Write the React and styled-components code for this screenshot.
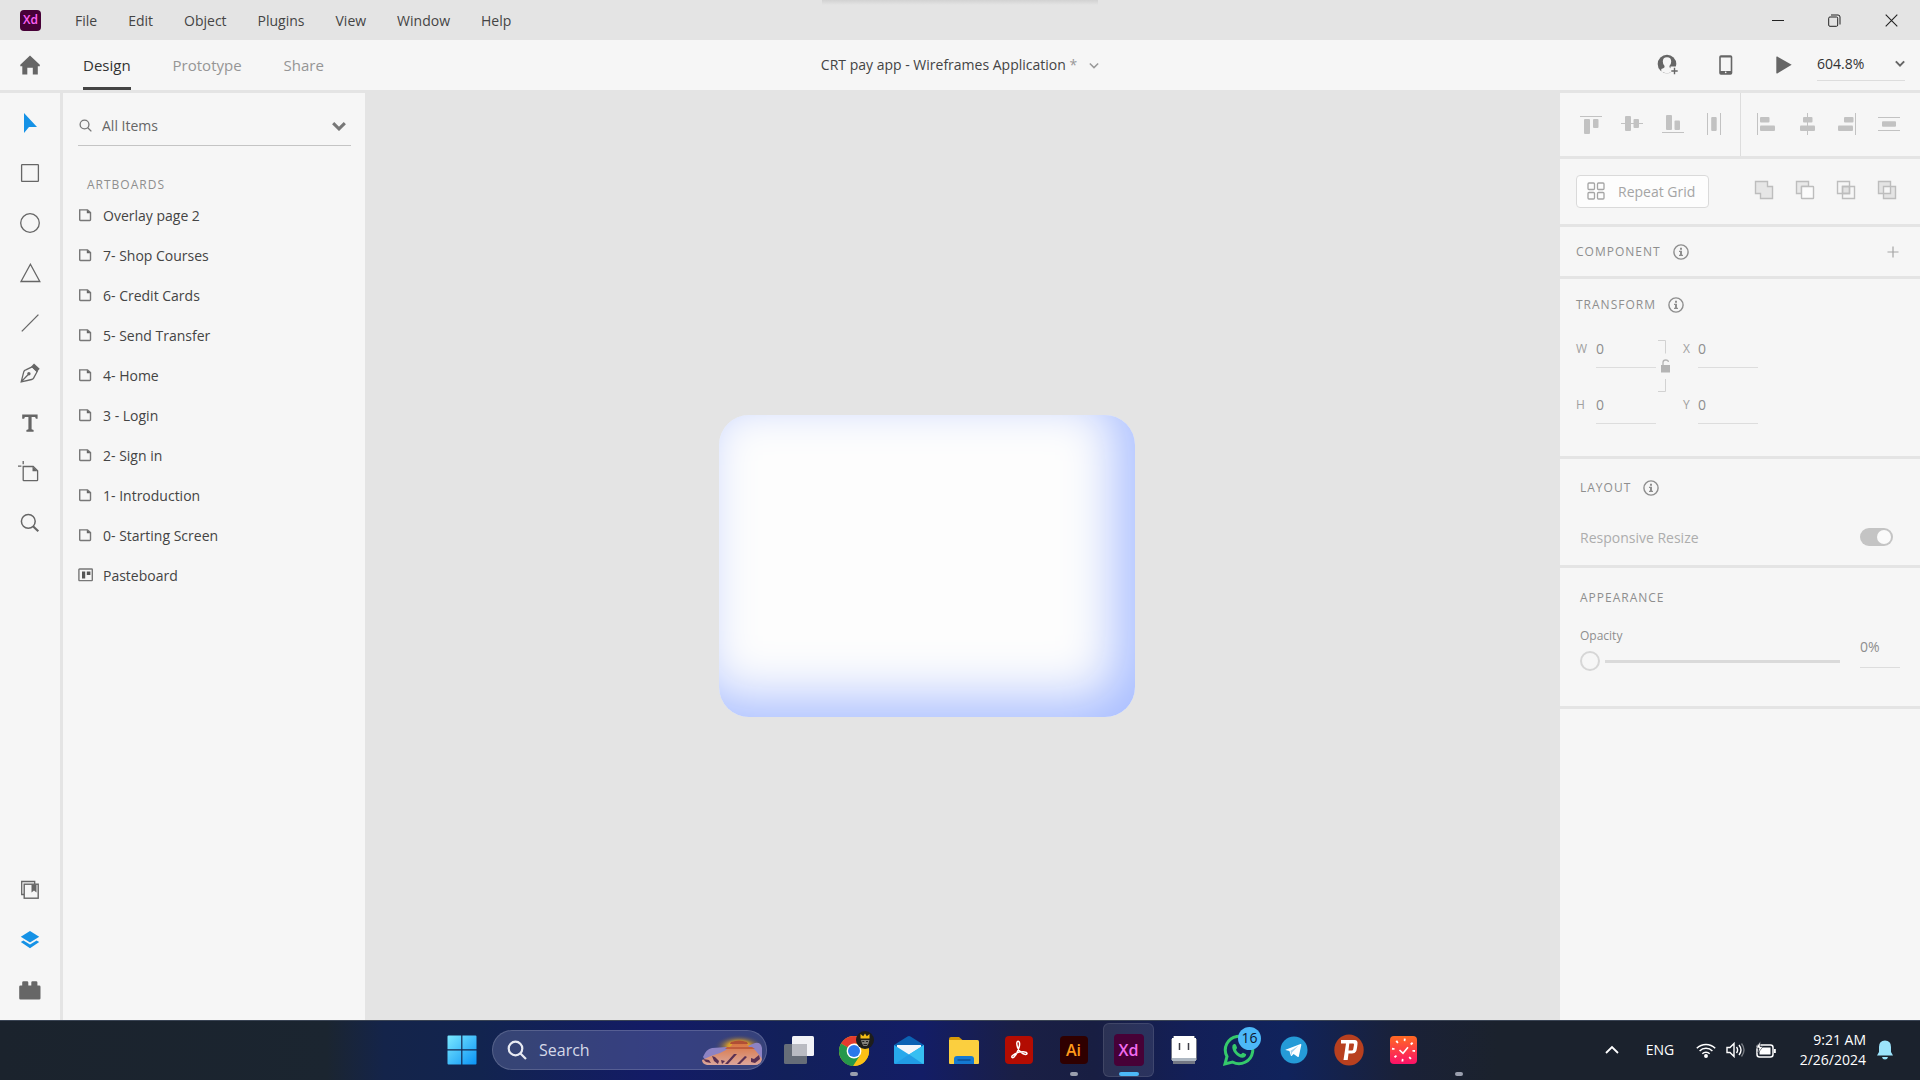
import React from "react";
import styled, { createGlobalStyle } from "styled-components";

const GlobalStyle = createGlobalStyle`
  *, *::before, *::after { box-sizing: border-box; }
  body { margin: 0; background: #e4e4e4; }
  body, button, input { font-family: "Open Sans", "Noto Sans", sans-serif; }
  button { margin: 0; padding: 0; border: 0; background: none; color: inherit; cursor: pointer; }
  input { margin: 0; padding: 0; border: 0; background: none; outline: 0; border-radius: 0; min-width: 0; }
  svg { display: block; flex: none; }
`;

const Window = styled.div`
  display: flex;
  flex-direction: column;
  height: 100vh;
  overflow: hidden;
  background: #e4e4e4;
  color: #444;
  font-size: 14px;
`;

/* Title bar */
const TitleBar = styled.header`
  display: flex;
  align-items: center;
  flex: none;
  height: 40px;
  padding-left: 20px;
  background: linear-gradient(#d2d2d2, #e4e4e4) top center / 276px 5px no-repeat, #e4e4e4;
`;
const AppBadge = styled.span`
  display: grid;
  place-items: center;
  width: 21px;
  height: 21px;
  border-radius: 4px;
  background: #470137;
  color: #ff61f6;
  font-size: 12px;
  font-weight: 600;
  line-height: 20px;
`;
const Menu = styled.nav`
  display: flex;
  gap: 31px;
  flex: 1;
  padding: 2px 0 0 34px;
`;
const MenuButton = styled.button`
  color: #444;
  font-size: 14px;
  line-height: 20px;
`;
const WindowControls = styled.div`
  display: flex;
`;
const WindowButton = styled.button`
  display: grid;
  place-items: center;
  width: 57px;
  height: 38px;
  color: #222;
`;

/* Mode bar */
const ModeBar = styled.div`
  display: grid;
  grid-template-columns: 1fr auto 1fr;
  flex: none;
  height: 50px;
  background: #f6f6f6;
`;
const Modes = styled.div`
  display: flex;
  align-items: stretch;
`;
const HomeButton = styled.button`
  display: grid;
  place-items: center;
  width: 60px;
  color: #666;
`;
const Tabs = styled.div`
  display: flex;
  gap: 42px;
  padding-left: 23px;
`;
const Tab = styled.button`
  padding-top: 3px;
  border-bottom: 3px solid ${(p) => (p.$active ? "#444" : "transparent")};
  color: ${(p) => (p.$active ? "#333" : "#959595")};
  font-size: 15px;
  line-height: 20px;
`;
const DocTitle = styled.button`
  display: flex;
  align-items: center;
  gap: 12px;
  color: #444;
  font-size: 14px;
  line-height: 20px;
`;
const Unsaved = styled.span`
  color: #999;
`;
const ModeActions = styled.div`
  display: flex;
  justify-content: flex-end;
  align-items: center;
  padding-right: 15px;
`;
const ActionButton = styled.button`
  display: grid;
  place-items: center;
  width: 58px;
  height: 48px;
  color: #666;
`;
const ZoomField = styled.div`
  display: flex;
  align-items: center;
  width: 88px;
  height: 32px;
  margin-left: 4px;
  padding-bottom: 2px;
  border-bottom: 1px solid #ddd;
  color: #666;
`;
const ZoomInput = styled.input`
  flex: 1;
  color: #333;
  font-size: 14px;
  line-height: 20px;
`;

/* Workspace */
const Workspace = styled.div`
  display: flex;
  flex: 1;
  min-height: 0;
  padding-top: 3px;
`;
const ToolRail = styled.nav`
  display: flex;
  flex-direction: column;
  justify-content: space-between;
  flex: none;
  width: 60px;
  margin-right: 3px;
  padding: 5px 0;
  background: #f6f6f6;
`;
const ToolGroup = styled.div`
  display: flex;
  flex-direction: column;
`;
const ToolButton = styled.button`
  display: grid;
  place-items: center;
  height: 50px;
  color: ${(p) => (p.$active ? "#1592e6" : "#666")};
`;
const ItemsPanel = styled.aside`
  flex: none;
  width: 302px;
  padding: 13px 14px 0 15px;
  background: #f6f6f6;
`;
const SearchField = styled.div`
  display: flex;
  align-items: center;
  gap: 10px;
  height: 40px;
  padding: 0 5px 0 1px;
  border-bottom: 1px solid #c4c4c4;
  color: #777;
`;
const SearchInput = styled.input`
  flex: 1;
  color: #666;
  font-size: 14px;
  line-height: 20px;
  &::placeholder { color: #666; opacity: 1; }
`;
const SmallCaps = styled.h2`
  margin: 0;
  color: #8e8e8e;
  font-size: 12px;
  font-weight: 400;
  line-height: 20px;
  letter-spacing: 1px;
`;
const GroupTitle = styled(SmallCaps)`
  margin: 29px 0 1px 9px;
`;
const ItemList = styled.ul`
  margin: 0;
  padding: 0;
  list-style: none;
`;
const ItemButton = styled.button`
  display: flex;
  align-items: center;
  gap: 9px;
  width: 100%;
  height: 40px;
  color: #777;
  text-align: left;
`;
const ItemName = styled.span`
  color: #444;
  font-size: 14px;
  line-height: 20px;
`;
const Canvas = styled.main`
  position: relative;
  flex: 1;
  overflow: hidden;
  background: #e4e4e4;
`;
const CardShape = styled.div`
  position: absolute;
  left: 354px;
  top: 322px;
  width: 416px;
  height: 302px;
  border-radius: 30px;
  background: #fdfdfd;
  box-shadow: inset -18px -18px 52px rgb(168, 189, 255);
`;

/* Inspector */
const Inspector = styled.aside`
  display: flex;
  flex-direction: column;
  gap: 3px;
  flex: none;
  width: 360px;
`;
const Section = styled.section`
  display: flex;
  flex-direction: column;
  padding: ${(p) => p.$pad || "0"};
  background: #f6f6f6;
  ${(p) => p.$fill && "flex: 1;"}
`;
const AlignRow = styled.div`
  display: flex;
  height: 63px;
`;
const AlignGroup = styled.div`
  display: flex;
  align-items: center;
  width: 50%;
  padding: 0 0 1px ${(p) => p.$inset}px;
  & + & { border-left: 1px solid #ddd; }
`;
const IconButton = styled.button`
  display: grid;
  place-items: center;
  flex: none;
  width: 41px;
  height: 40px;
  color: #c2c2c2;
`;
const RepeatRow = styled.div`
  display: flex;
  align-items: center;
  justify-content: space-between;
  height: 65px;
  padding: 0 13px 1px 16px;
`;
const RepeatButton = styled.button`
  display: flex;
  align-items: center;
  gap: 13px;
  height: 33px;
  padding: 0 13px 0 10px;
  border: 1px solid #dadada;
  border-radius: 4px;
  background: #fdfdfd;
  color: #a5a5a5;
  font-size: 14px;
`;
const IconRow = styled.div`
  display: flex;
  padding-bottom: 3px;
`;
const Heading = styled.div`
  display: flex;
  align-items: center;
  height: ${(p) => p.$height || 20}px;
  gap: 12px;
`;
const AddButton = styled.button`
  display: grid;
  place-items: center;
  width: 20px;
  height: 20px;
  margin-left: auto;
  color: #a5a5a5;
`;
const TransformGrid = styled.div`
  display: grid;
  grid-template-columns: 80px 27px 75px;
  grid-template-rows: 40px 56px;
  padding-top: 13px;
`;
const NumberField = styled.label`
  display: flex;
  align-items: flex-end;
  justify-content: space-between;
  color: #a0a0a0;
  font-size: 12px;
  line-height: 38px;
`;
const NumberInput = styled.input`
  width: 60px;
  height: 38px;
  padding-bottom: 1px;
  border-bottom: 1px solid #ddd;
  color: #8e8e8e;
  font-size: 14px;
`;
const LockButton = styled.button`
  display: grid;
  justify-items: start;
  align-items: center;
  grid-row: 1 / span 2;
  grid-column: 2;
  height: 76px;
  padding-left: 2px;
`;
const ToggleRow = styled.label`
  display: flex;
  align-items: center;
  justify-content: space-between;
  height: 20px;
  margin-top: 29px;
  color: #adadad;
  font-size: 14px;
`;
const Toggle = styled.input`
  appearance: none;
  display: flex;
  justify-content: flex-end;
  width: 33px;
  height: 18px;
  padding: 2px;
  border-radius: 9px;
  background: #c4c4c4;
  &::before {
    content: "";
    width: 14px;
    height: 14px;
    border-radius: 50%;
    background: #fafafa;
  }
`;
const OpacityRow = styled.div`
  display: flex;
  justify-content: space-between;
  padding-top: 18px;
`;
const OpacityField = styled.div`
  display: flex;
  flex-direction: column;
  width: 260px;
`;
const OpacityLabel = styled.label`
  height: 24px;
  color: #8e8e8e;
  font-size: 12px;
  line-height: 20px;
`;
const Slider = styled.input`
  appearance: none;
  width: 100%;
  height: 22px;
  background: linear-gradient(90deg, transparent 25px, #dadada 25px) center / 100% 3px no-repeat;
  &::-webkit-slider-thumb {
    appearance: none;
    width: 20px;
    height: 20px;
    border: 2px solid #d6d6d6;
    border-radius: 50%;
    background: #f6f6f6;
  }
`;
const PercentInput = styled.input`
  width: 40px;
  height: 42px;
  border-bottom: 1px solid #ddd;
  color: #8e8e8e;
  font-size: 14px;
`;

/* Taskbar */
const Taskbar = styled.footer`
  display: grid;
  grid-template-columns: 1fr auto 1fr;
  flex: none;
  height: 60px;
  padding-bottom: 2px;
  border-top: 1px solid #3a4454;
  background: linear-gradient(90deg, #1b232d 0%, #1b2530 17%, #14244a 20%, #12244f 25%, #131b66 34%, #12205a 41%, #131d66 48%, #1a1f45 53%, #181e42 57%, #131f58 62%, #10235c 67%, #1a2138 73%, #1b222d 78%);
`;
const TaskGroup = styled.div`
  display: flex;
  align-items: center;
  grid-column: 2;
`;
const TaskButton = styled.button`
  display: grid;
  place-items: center;
  position: relative;
  width: 51px;
  height: 54px;
  margin: 0 2px;
  border-radius: 6px;
  border: 1px solid ${(p) => (p.$active ? "rgba(255,255,255,.1)" : "transparent")};
  background: ${(p) => (p.$active ? "rgba(255,255,255,.09)" : "transparent")};
  &::after {
    content: "";
    display: ${(p) => (p.$mark ? "block" : "none")};
    position: absolute;
    bottom: 0;
    width: ${(p) => p.$mark}px;
    height: 4px;
    border-radius: 2px;
    background: ${(p) => (p.$active ? "#4cb8f8" : "#9a9fae")};
  }
`;
const TaskSearch = styled.label`
  display: flex;
  align-items: center;
  gap: 12px;
  width: 275px;
  height: 40px;
  margin: 0 4px 0 3px;
  padding: 0 3px 0 14px;
  border: 1px solid rgba(255, 255, 255, 0.16);
  border-radius: 20px;
  background: rgba(130, 140, 190, 0.32);
  color: #e8eaf2;
`;
const TaskSearchInput = styled.input`
  flex: 1;
  color: #e8eaf2;
  font-size: 16px;
  &::placeholder { color: #d5d9e8; opacity: 1; }
`;
const AppTile = styled.span`
  display: grid;
  place-items: center;
  width: ${(p) => p.$w}px;
  height: ${(p) => p.$h}px;
  border-radius: 4px;
  background: ${(p) => p.$bg};
  color: ${(p) => p.$fg};
  font-size: 16px;
  font-weight: 600;
`;
const CountBadge = styled.span`
  position: absolute;
  top: 3px;
  right: 2px;
  width: 23px;
  height: 23px;
  border-radius: 50%;
  background: #4cb8f8;
  color: #0d1730;
  font-size: 14px;
  line-height: 22px;
  text-align: center;
`;
const Tray = styled.div`
  display: flex;
  align-items: center;
  justify-content: flex-end;
  padding-right: 26px;
  color: #fff;
`;
const TrayButton = styled.button`
  display: grid;
  place-items: center;
  width: ${(p) => p.$w}px;
  height: 48px;
  font-size: 14px;
`;
const Clock = styled.button`
  display: flex;
  flex-direction: column;
  align-items: flex-end;
  width: 84px;
  margin-right: 10px;
  font-size: 14px;
  line-height: 20px;
`;

const Svg = ({ w, h, box, children, ...rest }) => (
  <svg width={w} height={h} viewBox={box || `0 0 ${w} ${h}`} fill="none" aria-hidden="true" {...rest}>
    {children}
  </svg>
);

const Chevron = ({ w = 12, h = 8, stroke = 2 }) => (
  <Svg w={w} h={h} box="0 0 12 8" stroke="currentColor" strokeWidth={stroke}>
    <path d="M1 1.5l5 5 5-5" />
  </Svg>
);

const InfoIcon = () => (
  <Svg w={16} h={16}>
    <circle cx="8" cy="8" r="7.1" stroke="#8e8e8e" strokeWidth="1.4" />
    <path d="M7 3.8h2v2H7zM6 6.8h3v4h1v1.200H6v-1.200h1V8H6z" fill="#8e8e8e" />
  </Svg>
);

const SelectIcon = () => (
  <Svg w={22} h={22}><path d="M5 1v20l5-6h8z" fill="currentColor" /></Svg>
);
const RectangleIcon = () => (
  <Svg w={20} h={20}><rect x="1.6" y="1.6" width="16.8" height="16.8" rx=".6" stroke="currentColor" strokeWidth="1.3" /></Svg>
);
const EllipseIcon = () => (
  <Svg w={20} h={20}><circle cx="10" cy="10" r="9.3" stroke="currentColor" strokeWidth="1.3" /></Svg>
);
const PolygonIcon = () => (
  <Svg w={22} h={20}><path d="M11.4 1.3l9.4 17.2H2z" stroke="currentColor" strokeWidth="1.3" /></Svg>
);
const LineIcon = () => (
  <Svg w={20} h={20}><path d="M1.8 18.4L18.4 1.6" stroke="currentColor" strokeWidth="1.3" /></Svg>
);
const PenIcon = () => (
  <Svg w={20} h={20}>
    <path d="M1.2 18.8L3.8 8.7c.3-.9 1-1.500 2-1.800l6.400-3.100 5 4.700-3.600 6.600c-.4.8-1.100 1.200-2 1.400L1.200 18.800zM1.600 18.400l6.400-6.600" stroke="currentColor" strokeWidth="1.3" />
    <circle cx="8.9" cy="10.8" r="1.7" fill="currentColor" />
    <path d="M11.2 3.400L14 .6l5.700 5.200-2.800 3.200z" fill="currentColor" />
  </Svg>
);
const TextIcon = () => (
  <Svg w={20} h={20}><path d="M2.200 1.500h15.400v4.300h-1.700l-.8-1.900h-3.500v12.400l2 .6v1.800H6.400v-1.800l2-.6V3.900H4.900l-.8 1.900H2.200z" fill="currentColor" /></Svg>
);
const ArtboardToolIcon = () => (
  <Svg w={24} h={24}>
    <path d="M5.200 5.500h10l4.400 4.200v9.300q0 .6-.6.6H5.800q-.6 0-.6-.6zM5.200 0v3.200M0 5.200h3.400" stroke="currentColor" strokeWidth="1.3" />
    <path d="M14.500 5.500l5.200 4.800h-5.200z" fill="currentColor" />
  </Svg>
);
const ZoomToolIcon = () => (
  <Svg w={20} h={20}>
    <circle cx="8.300" cy="8.300" r="6.900" stroke="currentColor" strokeWidth="1.5" />
    <path d="M13 13.300l5.300 5" stroke="currentColor" strokeWidth="2.200" />
  </Svg>
);
const LibrariesIcon = () => (
  <Svg w={20} h={20}>
    <path d="M4 14.500H1.700v-13h13V4" stroke="currentColor" strokeWidth="1.3" />
    <rect x="4.200" y="4.200" width="14" height="14" stroke="currentColor" strokeWidth="1.4" />
    <path d="M11.500 4.500h5v8L14 10.600l-2.500 1.900z" fill="currentColor" />
  </Svg>
);
const LayersIcon = () => (
  <Svg w={20} h={20}>
    <path d="M10 1l9.200 5.700L10 12.400.8 6.700z" fill="currentColor" />
    <path d="M3.400 10.400L10 14.600l6.600-4.200 2.600 1.600-9.200 6.200L.8 12z" fill="currentColor" />
  </Svg>
);
const PluginsIcon = () => (
  <Svg w={22} h={20}>
    <path d="M1.500 5.500h1.700v-3q0-1.300 1.300-1.300h3.600q1.200 0 1.200 1.300v3h3v-3q0-1.300 1.200-1.300h3.600q1.300 0 1.300 1.300v3h1.800q1.300 0 1.300 1.300v11.400q0 1.300-1.300 1.300H1.500Q.2 19.500.2 18.200V6.800q0-1.300 1.300-1.300z" fill="currentColor" />
  </Svg>
);

const tools = [
  ["Select", SelectIcon],
  ["Rectangle", RectangleIcon],
  ["Ellipse", EllipseIcon],
  ["Polygon", PolygonIcon],
  ["Line", LineIcon],
  ["Pen", PenIcon],
  ["Text", TextIcon],
  ["Artboard", ArtboardToolIcon],
  ["Zoom", ZoomToolIcon],
];
const panels = [
  ["Libraries", LibrariesIcon],
  ["Layers", LayersIcon],
  ["Plugins", PluginsIcon],
];

const ArtboardIcon = () => (
  <Svg w={16} h={16}>
    <path d="M1.700 1.900h7.800l3 2.600v7.300q0 .7-.7.700H2.400q-.7 0-.7-.7z" stroke="currentColor" strokeWidth="1.4" />
    <path d="M8.800 1.700l4 3.500h-4z" fill="#666" />
  </Svg>
);
const PasteboardIcon = () => (
  <Svg w={16} h={16}>
    <rect x=".9" y="1" width="13.400" height="11.600" rx=".6" stroke="currentColor" strokeWidth="1.4" />
    <path d="M4 3.400h3.200v7H4zM8.800 3.400h3.600v3.600H8.800z" fill="#555" />
  </Svg>
);

const artboards = ["Overlay page 2", "7- Shop Courses", "6- Credit Cards", "5- Send Transfer", "4- Home", "3 - Login", "2- Sign in", "1- Introduction", "0- Starting Screen"];

const AlignIcon = ({ line, bars }) => (
  <Svg w={22} h={22}>
    <path d={line} stroke="currentColor" strokeWidth="1" />
    {bars.map(([x, y, w, h]) => <rect key={`${x}-${y}`} x={x} y={y} width={w} height={h} rx="1" fill="currentColor" />)}
  </Svg>
);
const alignVertical = [
  ["Align top", "M0 3.500h22", [[4, 6, 6, 15], [13, 6, 5.500, 9]]],
  ["Align middle", "M0 10.500h22", [[4, 3, 6, 15], [12.500, 6, 5.500, 9]]],
  ["Align bottom", "M0 19.500h22", [[4, 2, 6, 15], [12.500, 7.500, 5.500, 9.500]]],
  ["Distribute horizontally", "M4.500 0v22M17.500 0v22", [[8.200, 4, 5.500, 14]]],
];
const alignHorizontal = [
  ["Align left", "M2.500 0v22", [[5, 4, 9.500, 5.500], [5, 12.500, 15, 5.500]]],
  ["Align center", "M11.500 0v22", [[7, 4, 9.500, 5.500], [4, 12.500, 15, 5.500]]],
  ["Align right", "M18.500 0v22", [[7, 4, 9.500, 5.500], [1, 12.500, 15, 5.500]]],
  ["Distribute vertically", "M0 4.500h22M0 17.500h22", [[4, 8.300, 14, 5.500]]],
];

const BoolIcon = ({ kind }) => (
  <Svg w={20} h={20} stroke="#bdbdbd" strokeWidth="1.4">
    {kind === "Add" && <path d="M1.500 1.500h12v5h5v12h-12v-5h-5z" fill="#e6e6e6" />}
    {kind === "Subtract" && <><path d="M6.500 13.500h-5v-12h12v5h-7z" fill="#e9e9e9" /><rect x="6.500" y="6.500" width="12" height="12" rx=".5" fill="#fbfbfb" /></>}
    {kind === "Intersect" && <><path d="M6.500 6.500h7v7h-7z" fill="#e2e2e2" /><path d="M1.500 1.500h12v12h-12zM6.500 6.500h12v12h-12z" /></>}
    {kind === "Exclude Overlap" && <path d="M1.500 1.500h12v12h-12zM6.500 6.500h12v12h-12z" fill="#e4e4e4" fillRule="evenodd" />}
  </Svg>
);

const SearchGlass = ({ size, stroke }) => (
  <Svg w={size} h={size} box="0 0 20 20" stroke="currentColor" strokeWidth={stroke}>
    <circle cx="8.500" cy="8.500" r="6.800" /><path d="M13.500 13.500L19 19" />
  </Svg>
);

const StartIcon = () => (
  <Svg w={30} h={30}>
    <defs><linearGradient id="win" x1="0" y1="0" x2="1" y2="1"><stop stopColor="#7be9ff" /><stop offset="1" stopColor="#0a93f5" /></linearGradient></defs>
    <path d="M.5 1.500q0-1 1-1h12.700v13.700H.5zM15.400.5h13.100q1 0 1 1v12.700H15.400zM.5 15.400h13.700v14.100H1.500q-1 0-1-1zM15.400 15.400h14.100v13.100q0 1-1 1H15.400z" fill="url(#win)" />
  </Svg>
);
const SunsetArt = () => (
  <Svg w={62} h={34}>
    <defs>
      <radialGradient id="sun" cx=".5" cy=".6" r=".5"><stop stopColor="#ffd83a" /><stop offset=".45" stopColor="#cf962c" /><stop offset="1" stopColor="#39406f" stopOpacity="0" /></radialGradient>
      <linearGradient id="rock" x1="0" y1="0" x2="0" y2="1"><stop stopColor="#d9743f" /><stop offset="1" stopColor="#dba69c" /></linearGradient>
    </defs>
    <ellipse cx="38" cy="11" rx="25" ry="12" fill="url(#sun)" />
    <path d="M2 24q3-8 9-9l15-1h18l10-4q6-1 7 5v10q-1 7-7 7H8z" fill="#8d83c4" />
    <path d="M1 27l9-4 9-3 6-3 5-4 2-3h13l3 4 6 3 5 6 2 3q-1 6-8 6H6q-5-1-5-5z" fill="url(#rock)" />
    <path d="M30 9q8-3 16 0l1 2H29z" fill="#b04f35" />
    <path d="M26 14h25l3 2H24z" fill="#c05c3c" />
    <path d="M2 26l6 1 2 3-5-1zM11 23l3 1 4 4-1 3-4-3zM33 21l-9 10h3l9-10zM44 23l-8 8h3l7-7zM50 25l3 1 5-4 1 4-5 4-4-1zM20 27l4 1-3 3z" fill="#593052" />
  </Svg>
);
const TaskViewIcon = () => (
  <Svg w={32} h={30}>
    <rect x="1" y="9" width="23" height="20" rx="1.500" fill="#666d78" />
    <rect x="9" y="1" width="22" height="20" rx="1.500" fill="#f1f2f6" />
    <path d="M9 9h15v12H9z" fill="#b9bbc2" />
  </Svg>
);
const ChromeIcon = () => (
  <Svg w={40} h={40}>
    <circle cx="20" cy="21" r="15" fill="#fbc116" />
    <path d="M20 21L7 13.500A15 15 0 0 1 33 13.500z" fill="#e33b2e" />
    <path d="M20 21L7 13.500A15 15 0 0 0 19 36l7.500-11.300z" fill="#25984b" />
    <path d="M20 13.500h13A15 15 0 0 1 20 36l6.500-11.300z" fill="#fbc116" />
    <circle cx="20" cy="21" r="7.400" fill="#fff" /><circle cx="20" cy="21" r="6" fill="#2b78ea" />
    <circle cx="31" cy="10" r="9" fill="#1d1d1b" />
    <path d="M26.500 8.500V4l2.700 2.300L31 3.500l1.800 2.800L35.500 4v4.500z" fill="#f2bd16" />
    <path d="M27 10h8.500l-1 3.500-1.500 2.500h-3.500L28 13.500z" fill="#817f79" />
    <path d="M28.300 11.500h2M32 11.500h2M29.500 14.500h3.500" stroke="#222" />
  </Svg>
);
const MailIcon = () => (
  <Svg w={32} h={30}>
    <path d="M1 10L14.500 1.500q1.500-1 3 0L31 10l-2 6H3z" fill="#0b62b4" />
    <path d="M4 10h24v10H4z" fill="#f2f6fb" />
    <path d="M1 10v18q0 1 1 1h28q1 0 1-1V10L16 19.500z" fill="#27a9ec" />
    <path d="M16 19.500L31 10v18q0 1-1 1z" fill="#36bff2" /><path d="M16 19.500L30 29H2z" fill="#1c8fe0" opacity=".5" />
  </Svg>
);
const FolderIcon = () => (
  <Svg w={32} h={30}>
    <path d="M1 4q0-2 2-2h8l4 3.500H1z" fill="#d69a08" />
    <path d="M1 5h28.500q1.500 0 1.500 1.500V28q0 1-1 1H2q-1 0-1-1z" fill="#fbcf3f" />
    <path d="M6 29v-5q0-3 3-3h14q3 0 3 3v5z" fill="#1479d2" /><path d="M9.500 25h13" stroke="#0b4f95" strokeWidth="1.5" />
  </Svg>
);
const AcrobatIcon = () => (
  <Svg w={28} h={28}>
    <rect width="28" height="28" rx="4" fill="#b30c02" />
    <path d="M12.600 5.500c2-.8 2.400 2 1.600 5.200-.9 3.500-3.400 8.600-5.400 10.500-1.300 1.200-2.800 0-1.500-1.400 2.300-2.400 7.700-4.100 12.200-3.900 3 .2 3.300 2.600.9 2.500-3-.2-6.500-3.500-7.800-7-.8-2.500-.9-5.500 0-5.900z" stroke="#fff" strokeWidth="1.5" />
  </Svg>
);
const IllustratorIcon = () => <AppTile $w={28} $h={28} $bg="#2f0000" $fg="#ff9a1a">Ai</AppTile>;
const XdIcon = () => <AppTile $w={30} $h={32} $bg="#470137" $fg="#f26bf0">Xd</AppTile>;
const GhostIcon = () => (
  <Svg w={28} h={30}>
    <path d="M3 1h22v3h2v21h-2v4H3v-4H1V4h2z" fill="#737784" />
    <path d="M4 1h20v2h2v20H2V3h2z" fill="#fff" /><path d="M2 23h24v3H2z" fill="#aeb8c2" />
    <path d="M9.500 8v7M18.500 8v7" stroke="#3d3d46" strokeWidth="1.5" />
  </Svg>
);
const WhatsAppIcon = () => (
  <>
    <Svg w={34} h={34}>
      <path d="M3 31l2-7.500A13.700 13.700 0 1 1 10.500 29z" stroke="#35c96b" strokeWidth="3" />
      <path d="M10.500 12.500c1-2 3-2 3.500-.5l1 2.500c.3.800-.8 1.800-1 2.300.8 2 2.800 3.700 4.800 4.500.7-.3 1.600-1.700 2.300-1.500l2.700 1.300c1 .6-.5 3.900-3.300 3.700-5-.3-11.500-7-10-12.300z" fill="#35c96b" />
    </Svg>
    <CountBadge>16</CountBadge>
  </>
);
const TelegramIcon = () => (
  <Svg w={28} h={28}>
    <circle cx="14" cy="14" r="13.500" fill="#259bd7" />
    <path d="M5.500 13.700L20.500 8q1-.3.800.9l-2.500 11.500q-.3 1-1.300.4l-3.900-2.900-2 2q-.6.500-.8-.3l-1.400-4.500-3.900-1.200q-.6-.2 0-.2z" fill="#fff" />
    <path d="M10.500 14.800l8-5-6.500 6.700-.6 3z" fill="#a8d3ec" />
  </Svg>
);
const PsiphonIcon = () => (
  <Svg w={30} h={32}>
    <ellipse cx="15" cy="16" rx="14.700" ry="15.500" fill="#b8401f" />
    <path d="M7 6h13.500q3.500.2 3 4-.6 5.800-1.500 7.500-1 2-4 2h-3.500l-.8 6.500H9.500L12 9.500h3.300l-.8 7h3.300q1.200-.1 1.400-1l.8-4.800q.1-1.200-1-1.200H7z" fill="#fff" />
  </Svg>
);
const WatchIcon = () => (
  <Svg w={28} h={30}>
    <defs><linearGradient id="watch" x1="0" y1="0" x2="0" y2="1"><stop stopColor="#ff6a22" /><stop offset="1" stopColor="#fb1168" /></linearGradient></defs>
    <rect y="1" width="27" height="28" rx="4" fill="url(#watch)" />
    <circle cx="13.500" cy="15" r="10.300" stroke="#fff" strokeWidth="2.6" strokeDasharray="1.8 6.290" />
    <path d="M9.500 15l3.500 3.300 5-6" stroke="#fff" strokeWidth="1.6" />
  </Svg>
);

const tasks = [
  { name: "Task View", Icon: TaskViewIcon },
  { name: "Chrome", Icon: ChromeIcon, mark: 8 },
  { name: "Mail", Icon: MailIcon },
  { name: "File Explorer", Icon: FolderIcon },
  { name: "Acrobat", Icon: AcrobatIcon },
  { name: "Illustrator", Icon: IllustratorIcon, mark: 8 },
  { name: "Adobe XD", Icon: XdIcon, mark: 20, active: true },
  { name: "Ghost", Icon: GhostIcon },
  { name: "WhatsApp", Icon: WhatsAppIcon },
  { name: "Telegram", Icon: TelegramIcon },
  { name: "Psiphon", Icon: PsiphonIcon },
  { name: "Watch", Icon: WatchIcon },
  { name: "Background app", mark: 8 },
];

export default function App() {
  return (
    <Window>
      <GlobalStyle />
      <TitleBar>
        <AppBadge>Xd</AppBadge>
        <Menu>
          {["File", "Edit", "Object", "Plugins", "View", "Window", "Help"].map((m) => <MenuButton key={m}>{m}</MenuButton>)}
        </Menu>
        <WindowControls>
          <WindowButton aria-label="Minimize"><Svg w={12} h={12}><path d="M0 6.500h12" stroke="currentColor" /></Svg></WindowButton>
          <WindowButton aria-label="Restore"><Svg w={13} h={13} stroke="currentColor"><rect x=".7" y="3" width="9" height="9.300" rx="1.200" /><path d="M3 1h7q2 0 2 2v7.500" /></Svg></WindowButton>
          <WindowButton aria-label="Close"><Svg w={13} h={13} stroke="currentColor" strokeWidth="1.1"><path d="M.7.7l11.600 11.600M12.300.7L.7 12.300" /></Svg></WindowButton>
        </WindowControls>
      </TitleBar>

      <ModeBar>
        <Modes>
          <HomeButton aria-label="Home"><Svg w={20} h={20}><path d="M10 .5l9.800 9.300v1.400h-2v8.300h-5v-6.700H7.300v6.700h-5v-8.300h-2V9.800z" fill="currentColor" /></Svg></HomeButton>
          <Tabs>
            <Tab $active>Design</Tab><Tab>Prototype</Tab><Tab>Share</Tab>
          </Tabs>
        </Modes>
        <DocTitle>
          <span>CRT pay app - Wireframes Application <Unsaved>*</Unsaved></span>
          <Unsaved><Chevron w={10} h={7} stroke={1.8} /></Unsaved>
        </DocTitle>
        <ModeActions>
          <ActionButton aria-label="Invite">
            <Svg w={22} h={22}>
              <circle cx="10" cy="10" r="9.300" fill="currentColor" />
              <path d="M10 3.200q4.200 0 4.200 4.300 0 2.800-1.800 4.500-.2 1.700 1.300 2.300l2 .8v2.300q-5.700 3.600-11.400 0v-2.300l2-.8q1.500-.6 1.300-2.300-1.800-1.700-1.800-4.500 0-4.300 4.200-4.300z" fill="#f6f6f6" />
              <path d="M13.500 12.500h8v8h-8z" fill="#f6f6f6" /><path d="M17.500 13.800v6.400M14.300 17h6.400" stroke="currentColor" strokeWidth="1.4" />
            </Svg>
          </ActionButton>
          <ActionButton aria-label="Device preview"><Svg w={14} h={20}><rect x="1" y="1" width="11.500" height="18" rx="1" stroke="currentColor" strokeWidth="1.6" /><path d="M1 16h11.500v3H1zM1 1h11.500v1.500H1z" fill="currentColor" /><circle cx="6.700" cy="17.400" r=".8" fill="#f6f6f6" /></Svg></ActionButton>
          <ActionButton aria-label="Play"><Svg w={16} h={18}><path d="M.3 1.200Q.3.200 1.300.6l14.400 8.200-14.400 8.600q-1 .4-1-.6z" fill="currentColor" /></Svg></ActionButton>
          <ZoomField>
            <ZoomInput aria-label="Zoom level" defaultValue="604.8%" />
            <button aria-label="Zoom presets"><Chevron w={10} h={7} stroke={2.4} /></button>
          </ZoomField>
        </ModeActions>
      </ModeBar>

      <Workspace>
        <ToolRail>
          <ToolGroup>{tools.map(([name, Icon]) => <ToolButton key={name} aria-label={name} $active={name === "Select"}><Icon /></ToolButton>)}</ToolGroup>
          <ToolGroup>{panels.map(([name, Icon]) => <ToolButton key={name} aria-label={name} $active={name === "Layers"}><Icon /></ToolButton>)}</ToolGroup>
        </ToolRail>

        <ItemsPanel>
          <SearchField>
            <SearchGlass size={13} stroke={2} />
            <SearchInput aria-label="Search items" placeholder="All Items" />
            <button aria-label="Filter items"><Chevron w={14} h={10} stroke={2.6} /></button>
          </SearchField>
          <GroupTitle>ARTBOARDS</GroupTitle>
          <ItemList>
            {artboards.map((a) => <li key={a}><ItemButton><ArtboardIcon /><ItemName>{a}</ItemName></ItemButton></li>)}
            <li><ItemButton><PasteboardIcon /><ItemName>Pasteboard</ItemName></ItemButton></li>
          </ItemList>
        </ItemsPanel>

        <Canvas><CardShape /></Canvas>

        <Inspector>
          <Section>
            <AlignRow>
              <AlignGroup $inset={10}>{alignVertical.map(([n, line, bars]) => <IconButton key={n} aria-label={n}><AlignIcon line={line} bars={bars} /></IconButton>)}</AlignGroup>
              <AlignGroup $inset={4}>{alignHorizontal.map(([n, line, bars]) => <IconButton key={n} aria-label={n}><AlignIcon line={line} bars={bars} /></IconButton>)}</AlignGroup>
            </AlignRow>
          </Section>
          <Section>
            <RepeatRow>
              <RepeatButton>
                <Svg w={18} h={18} stroke="currentColor" strokeWidth="1.3"><rect x="1" y="1" width="6.500" height="6.500" rx="1" /><rect x="10.500" y="1" width="6.500" height="6.500" rx="1" /><rect x="1" y="10.500" width="6.500" height="6.500" rx="1" /><rect x="10.500" y="10.500" width="6.500" height="6.500" rx="1" /></Svg>
                Repeat Grid
              </RepeatButton>
              <IconRow>{["Add", "Subtract", "Intersect", "Exclude Overlap"].map((k) => <IconButton key={k} aria-label={k}><BoolIcon kind={k} /></IconButton>)}</IconRow>
            </RepeatRow>
          </Section>
          <Section $pad="0 17px 0 16px">
            <Heading $height={49}>
              <SmallCaps>COMPONENT</SmallCaps><InfoIcon />
              <AddButton aria-label="Make component"><Svg w={12} h={12}><path d="M6 .5v11M.5 6h11" stroke="currentColor" strokeWidth="1.2" /></Svg></AddButton>
            </Heading>
          </Section>
          <Section $pad="16px 16px 32px">
            <Heading><SmallCaps>TRANSFORM</SmallCaps><InfoIcon /></Heading>
            <TransformGrid>
              <NumberField>W<NumberInput defaultValue="0" /></NumberField>
              <LockButton aria-label="Lock aspect ratio">
                <Svg w={14} h={54}>
                  <path d="M0 1.500h7.500v13M7.500 40v12.500H0" stroke="#d2d2d2" />
                  <path d="M3 26h9v7.500H3z" fill="#b4b4b4" /><path d="M5 26v-2.500q0-2.500 2.700-2.500t2.600 2" stroke="#b4b4b4" strokeWidth="1.3" />
                </Svg>
              </LockButton>
              <NumberField>X<NumberInput defaultValue="0" /></NumberField>
              <NumberField>H<NumberInput defaultValue="0" /></NumberField>
              <NumberField>Y<NumberInput defaultValue="0" /></NumberField>
            </TransformGrid>
          </Section>
          <Section $pad="19px 27px 18px 20px">
            <Heading><SmallCaps>LAYOUT</SmallCaps><InfoIcon /></Heading>
            <ToggleRow>Responsive Resize<Toggle type="checkbox" role="switch" defaultChecked /></ToggleRow>
          </Section>
          <Section $pad="20px 20px 34px">
            <Heading><SmallCaps>APPEARANCE</SmallCaps></Heading>
            <OpacityRow>
              <OpacityField>
                <OpacityLabel htmlFor="opacity">Opacity</OpacityLabel>
                <Slider id="opacity" type="range" min="0" max="100" defaultValue="0" />
              </OpacityField>
              <PercentInput aria-label="Opacity value" defaultValue="0%" />
            </OpacityRow>
          </Section>
          <Section $fill />
        </Inspector>
      </Workspace>

      <Taskbar>
        <TaskGroup>
          <TaskButton aria-label="Start"><StartIcon /></TaskButton>
          <TaskSearch>
            <SearchGlass size={20} stroke={2.2} />
            <TaskSearchInput placeholder="Search" aria-label="Search" />
            <SunsetArt />
          </TaskSearch>
          {tasks.map(({ name, Icon, mark, active }) => <TaskButton key={name} aria-label={name} $mark={mark} $active={active}>{Icon && <Icon />}</TaskButton>)}
        </TaskGroup>
        <Tray>
          <TrayButton $w={36} aria-label="Show hidden icons"><Svg w={14} h={9}><path d="M1 8l6-6 6 6" stroke="currentColor" strokeWidth="1.8" /></Svg></TrayButton>
          <TrayButton $w={60}>ENG</TrayButton>
          <TrayButton $w={32} aria-label="Network">
            <Svg w={20} h={16} stroke="currentColor" strokeWidth="1.5">
              <path d="M.8 6.200a13 13 0 0 1 18.400 0M3.600 9a9 9 0 0 1 12.800 0M6.300 11.800a5.200 5.200 0 0 1 7.400 0" /><circle cx="10" cy="14" r="1.200" fill="currentColor" />
            </Svg>
          </TrayButton>
          <TrayButton $w={28} aria-label="Volume"><Svg w={20} h={16} stroke="currentColor" strokeWidth="1.4"><path d="M1 5.500h3l4-4v13l-4-4H1zM10.500 5q2.200 3 0 6M13 3q4 5 0 10" /><path d="M15.500 1.500q5 6.500 0 13" opacity=".4" /></Svg></TrayButton>
          <TrayButton $w={32} aria-label="Battery"><Svg w={20} h={18}><rect x="1" y="4" width="16" height="12" rx="2.500" stroke="currentColor" strokeWidth="1.5" /><path d="M3.500 6.500h11v7h-11zM18 8h1.800v4H18z" fill="currentColor" /><path d="M4.500 0L0 7h3l-1 5 5-6.500H4z" fill="#fff" stroke="#1b222d" strokeWidth=".6" /></Svg></TrayButton>
          <Clock><span>9:21 AM</span><span>2/26/2024</span></Clock>
          <button aria-label="Notifications"><Svg w={18} h={20}><path d="M9 .5q6 0 6 6.500v5l2 3.500H1L3 12V7Q3 .5 9 .5zM6 17h6q-.5 2.500-3 2.500T6 17z" fill="#9be3fb" /></Svg></button>
        </Tray>
      </Taskbar>
    </Window>
  );
}
